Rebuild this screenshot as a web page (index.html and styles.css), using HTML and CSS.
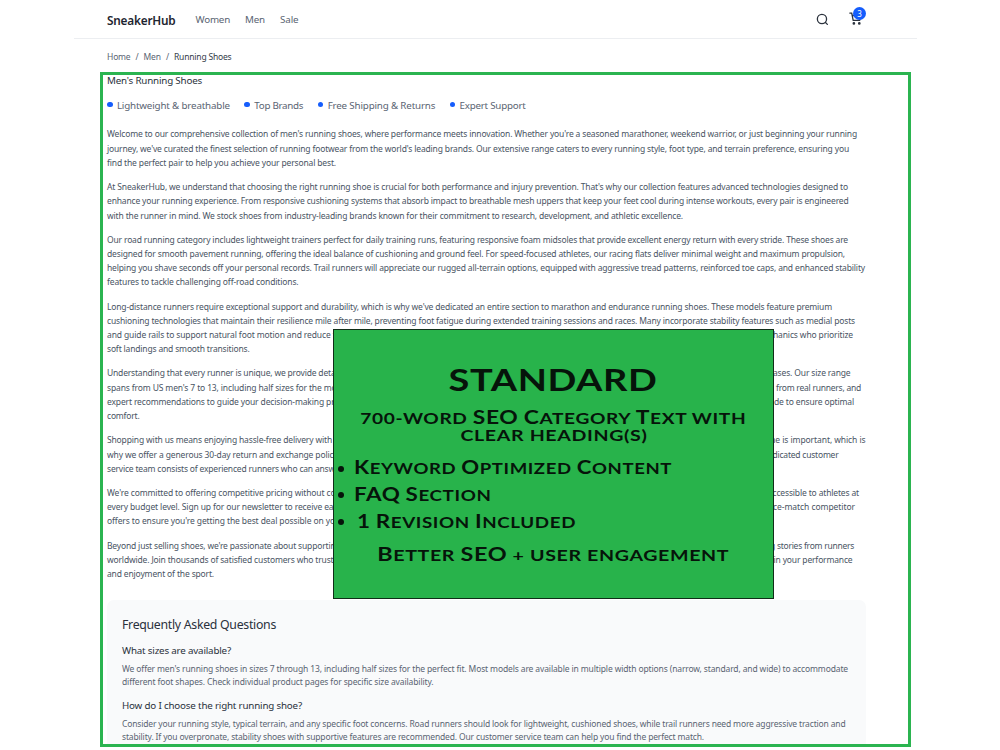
FILE: index.html
```html
<!DOCTYPE html>
<html lang="en">
<head>
<meta charset="utf-8">
<title>SneakerHub - Men's Running Shoes</title>
<link rel="stylesheet" href="styles.css">
</head>
<body>
<div class="page">
  <header class="header">
    <span class="brand" data-w="68.5">SneakerHub</span>
    <nav class="nav"><a data-w="34.5">Women</a><a data-w="20">Men</a><a data-w="18.5">Sale</a></nav>
    <div class="tools">
      <svg class="search" viewBox="0 0 24 24"><circle cx="11" cy="11" r="8.5"/><path d="M17.5 17.5 21 21"/></svg>
      <div class="cart">
        <svg viewBox="0 0 24 24"><circle cx="9" cy="21" r="1.3"/><circle cx="19" cy="21" r="1.3"/><path d="M1.5 2H5l2.7 13.4h12L22 6.500H6"/></svg>
        <span class="badge">3</span>
      </div>
    </div>
  </header>
  <nav class="crumbs"><a data-w="23.5">Home</a><i>/</i><a data-w="17.5">Men</a><i>/</i><span class="here" data-w="57.500">Running Shoes</span></nav>
  <main class="frame">
    <h1><span data-w="95">Men's Running Shoes</span></h1>
    <ul class="features">
      <li><span data-w="113">Lightweight &amp; breathable</span></li>
      <li><span data-w="49">Top Brands</span></li>
      <li><span data-w="107.5">Free Shipping &amp; Returns</span></li>
      <li><span data-w="66">Expert Support</span></li>
    </ul>
    <article class="copy">
      <p>
        <span class="line"><span data-w="750">Welcome to our comprehensive collection of men's running shoes, where performance meets innovation. Whether you're a seasoned marathoner, weekend warrior, or just beginning your running</span></span>
        <span class="line"><span data-w="742">journey, we've curated the finest selection of running footwear from the world's leading brands. Our extensive range caters to every running style, foot type, and terrain preference, ensuring you</span></span>
        <span class="line"><span data-w="229">find the perfect pair to help you achieve your personal best.</span></span>
      </p>
      <p>
        <span class="line"><span data-w="741">At SneakerHub, we understand that choosing the right running shoe is crucial for both performance and injury prevention. That's why our collection features advanced technologies designed to</span></span>
        <span class="line"><span data-w="741.5">enhance your running experience. From responsive cushioning systems that absorb impact to breathable mesh uppers that keep your feet cool during intense workouts, every pair is engineered</span></span>
        <span class="line"><span data-w="576">with the runner in mind. We stock shoes from industry-leading brands known for their commitment to research, development, and athletic excellence.</span></span>
      </p>
      <p>
        <span class="line"><span data-w="741">Our road running category includes lightweight trainers perfect for daily training runs, featuring responsive foam midsoles that provide excellent energy return with every stride. These shoes are</span></span>
        <span class="line"><span data-w="738">designed for smooth pavement running, offering the ideal balance of cushioning and ground feel. For speed-focused athletes, our racing flats deliver minimal weight and maximum propulsion,</span></span>
        <span class="line"><span data-w="758">helping you shave seconds off your personal records. Trail runners will appreciate our rugged all-terrain options, equipped with aggressive tread patterns, reinforced toe caps, and enhanced stability</span></span>
        <span class="line"><span data-w="191.500">features to tackle challenging off-road conditions.</span></span>
      </p>
      <p>
        <span class="line"><span data-w="725">Long-distance runners require exceptional support and durability, which is why we've dedicated an entire section to marathon and endurance running shoes. These models feature premium</span></span>
        <span class="line"><span data-w="748">cushioning technologies that maintain their resilience mile after mile, preventing foot fatigue during extended training sessions and races. Many incorporate stability features such as medial posts</span></span>
        <span class="line"><span data-w="228.500">and guide rails to support natural foot motion and reduce f</span><span class="tail e853" data-w="80">hanics who prioritize</span></span>
        <span class="line"><span data-w="142.500">soft landings and smooth transitions.</span></span>
      </p>
      <p>
        <span class="line"><span data-w="228.500">Understanding that every runner is unique, we provide deta</span><span class="tail e850" data-w="77.500">ases. Our size range</span></span>
        <span class="line"><span data-w="229.500">spans from US men's 7 to 13, including half sizes for the mo</span><span class="tail e861" data-w="85">from real runners, and</span></span>
        <span class="line"><span data-w="227.500">expert recommendations to guide your decision-making pr</span><span class="tail e854" data-w="80">de to ensure optimal</span></span>
        <span class="line"><span data-w="32.500">comfort.</span></span>
      </p>
      <p>
        <span class="line"><span data-w="225">Shopping with us means enjoying hassle-free delivery with</span><span class="tail e865" data-w="98">me is important, which is</span></span>
        <span class="line"><span data-w="226.500">why we offer a generous 30-day return and exchange polic</span><span class="tail e838" data-w="66">dicated customer</span></span>
        <span class="line"><span data-w="228">service team consists of experienced runners who can answ</span></span>
      </p>
      <p>
        <span class="line"><span data-w="228.500">We're committed to offering competitive pricing without co</span><span class="tail e859" data-w="86.500">ccessible to athletes at</span></span>
        <span class="line"><span data-w="226.500">every budget level. Sign up for our newsletter to receive ea</span><span class="tail e855" data-w="82">ce-match competitor</span></span>
        <span class="line"><span data-w="228">offers to ensure you're getting the best deal possible on yo</span></span>
      </p>
      <p>
        <span class="line"><span data-w="228.500">Beyond just selling shoes, we're passionate about supportin</span><span class="tail e854" data-w="84">g stories from runners</span></span>
        <span class="line"><span data-w="226.500">worldwide. Join thousands of satisfied customers who trust</span><span class="tail e852" data-w="79">in your performance</span></span>
        <span class="line"><span data-w="107">and enjoyment of the sport.</span></span>
      </p>
    </article>
    <section class="faq">
      <h2><span data-w="154">Frequently Asked Questions</span></h2>
      <h3><span data-w="109">What sizes are available?</span></h3>
      <p>
        <span class="line"><span data-w="726">We offer men's running shoes in sizes 7 through 13, including half sizes for the perfect fit. Most models are available in multiple width options (narrow, standard, and wide) to accommodate</span></span>
        <span class="line"><span data-w="311.500">different foot shapes. Check individual product pages for specific size availability.</span></span>
      </p>
      <h3><span data-w="180">How do I choose the right running shoe?</span></h3>
      <p>
        <span class="line"><span data-w="723.500">Consider your running style, typical terrain, and any specific foot concerns. Road runners should look for lightweight, cushioned shoes, while trail runners need more aggressive traction and</span></span>
        <span class="line"><span data-w="582">stability. If you overpronate, stability shoes with supportive features are recommended. Our customer service team can help you find the perfect match.</span></span>
      </p>
    </section>
  </main>
  <aside class="offer">
    <div class="offer-title"><span data-stretch="209">STANDARD</span></div>
    <div class="offer-sub"><span data-stretch="386">700-word <b>SEO</b> <b>C</b>ategory <b>T</b>ext with</span></div>
    <div class="offer-sub second"><span data-stretch="187">clear heading(s)</span></div>
    <ul>
      <li><span data-stretch="318"><b>K</b>eyword <b>O</b>ptimized <b>C</b>ontent</span></li>
      <li><span data-stretch="137.500"><b>FAQ</b> <b>S</b>ection</span></li>
      <li class="inset"><span data-stretch="219"><b>1</b> <b>R</b>evision <b>I</b>ncluded</span></li>
    </ul>
    <div class="offer-foot"><span data-stretch="352"><b>B</b>etter <b>SEO</b> + user engagement</span></div>
  </aside>
</div>
<script src="fit.js"></script>
</body>
</html>
```

FILE: styles.css
```css
* { box-sizing: border-box; margin: 0; padding: 0; }
body { background: #fff; font-family: "Noto Sans", "Open Sans", sans-serif; color: #1e2939; }
.page { position: relative; width: 1000px; height: 750px; overflow: hidden; }
[data-w] { display: inline-block; white-space: nowrap; flex: none; }
[data-stretch] { display: inline-block; white-space: nowrap; letter-spacing: 0.5px; }

.header { display: flex; align-items: center; height: 39px; margin-left: 74px; width: 843px; padding: 1px 54px 0 33px; border-bottom: 1px solid #eceef1; }
.brand { font-size: 11.8px; font-weight: 600; color: #1e2530; }
.nav { display: flex; gap: 15px; margin-left: 20px; font-size: 9.8px; color: #5a6472; }
.tools { display: flex; gap: 20px; margin-left: auto; align-items: center; }
.tools svg { display: block; fill: none; stroke: #2b323d; stroke-width: 2.4; stroke-linecap: round; }
.search { width: 13px; height: 13px; margin-bottom: 1px; }
.cart { position: relative; width: 14px; margin-bottom: 2px; }
.cart svg { width: 13px; height: 13px; }
.badge { position: absolute; left: 4px; top: -5px; width: 13px; height: 13px; border-radius: 50%; background: #155dfc; color: #fff; font-size: 8px; line-height: 13px; text-align: center; }

.crumbs { display: flex; gap: 5px; height: 33px; padding-left: 107px; line-height: 35px; font-size: 8.5px; color: #5a6472; }
.crumbs i { width: 3px; font-style: normal; text-align: center; }
.crumbs .here { color: #343c49; }

.frame { margin-left: 100px; width: 811px; height: 675px; border: 3px solid #2bb450; padding: 0 42px 0 4px; overflow: hidden; }
h1, h2, h3 { font-weight: 400; color: #2a313c; }
h1 { font-size: 9.8px; line-height: 12px; }
.features { display: flex; gap: 14.500px; list-style: none; margin-top: 11px; font-size: 9.800px; line-height: 15px; color: #5a6472; }
.features li { display: flex; }
.features li::before { content: ""; width: 5.500px; height: 5.500px; margin: 3.500px 4.400px 0 0; border-radius: 50%; background: #155dfc; }
.copy { margin-top: 14.400px; font-size: 8.500px; line-height: 14.250px; color: #495463; }
.copy p { margin-bottom: 9.900px; }
.line { display: flex; position: relative; white-space: nowrap; }
.tail { position: absolute; top: 0; }
.e838 { right: 27.500px; }
.e850 { right: 15.500px; }
.e852 { right: 13.500px; }
.e853 { right: 13px; }
.e854 { right: 12px; }
.e855 { right: 11px; }
.e859 { right: 7px; }
.e861 { right: 5px; }
.e865 { right: 0.500px; }

.faq { width: 759px; height: 160px; margin-top: 19px; padding: 15px; background: #f9fafb; border-radius: 7px; }
.faq h2 { font-size: 12.300px; line-height: 20px; }
.faq h3 { margin-top: 8px; font-size: 9.800px; line-height: 15px; }
.faq p { margin-top: 5px; font-size: 8.500px; line-height: 12.500px; color: #5a6472; }
.faq p + h3 { margin-top: 10px; }

.offer { position: absolute; left: 333px; top: 329px; width: 441px; height: 270px; padding-top: 33px; background: #28b34b; border: 1.500px solid #102e18; font-family: Lato, sans-serif; font-weight: 700; color: #06140a; text-transform: uppercase; text-align: center; font-size: 15.500px; line-height: 17px; }
.offer b { font-size: 18.500px; font-weight: 700; line-height: 1px; }
.offer-title { font-size: 30.500px; line-height: 32px; }
.offer-sub { height: 17px; margin-top: 15px; }
.offer-sub.second { margin-top: 0; }
.offer ul { list-style: none; margin-top: 16px; text-align: left; }
.offer li { display: flex; align-items: center; height: 17px; margin-bottom: 9.800px; }
.offer li::before { content: ""; width: 6px; height: 6px; margin: 0 10px 0 4px; border-radius: 50%; background: #06140a; }
.offer li.inset::before { margin-right: 12.500px; }
.offer li [data-stretch] { transform-origin: left; }
.offer-foot { height: 17px; margin-top: 16px; }
```

FILE: fit.js
```js
document.querySelectorAll('[data-w]').forEach(function (el) {
  var w = parseFloat(el.dataset.w);
  var natural = el.getBoundingClientRect().width;
  el.style.letterSpacing = (w - natural) / el.textContent.length + 'px';
  el.style.width = w + 'px';
});
// Widen the display lettering of the offer card.
document.querySelectorAll('[data-stretch]').forEach(function (el) {
  var w = parseFloat(el.dataset.stretch);
  el.style.transform = 'scaleX(' + w / el.getBoundingClientRect().width + ')';
});
```
